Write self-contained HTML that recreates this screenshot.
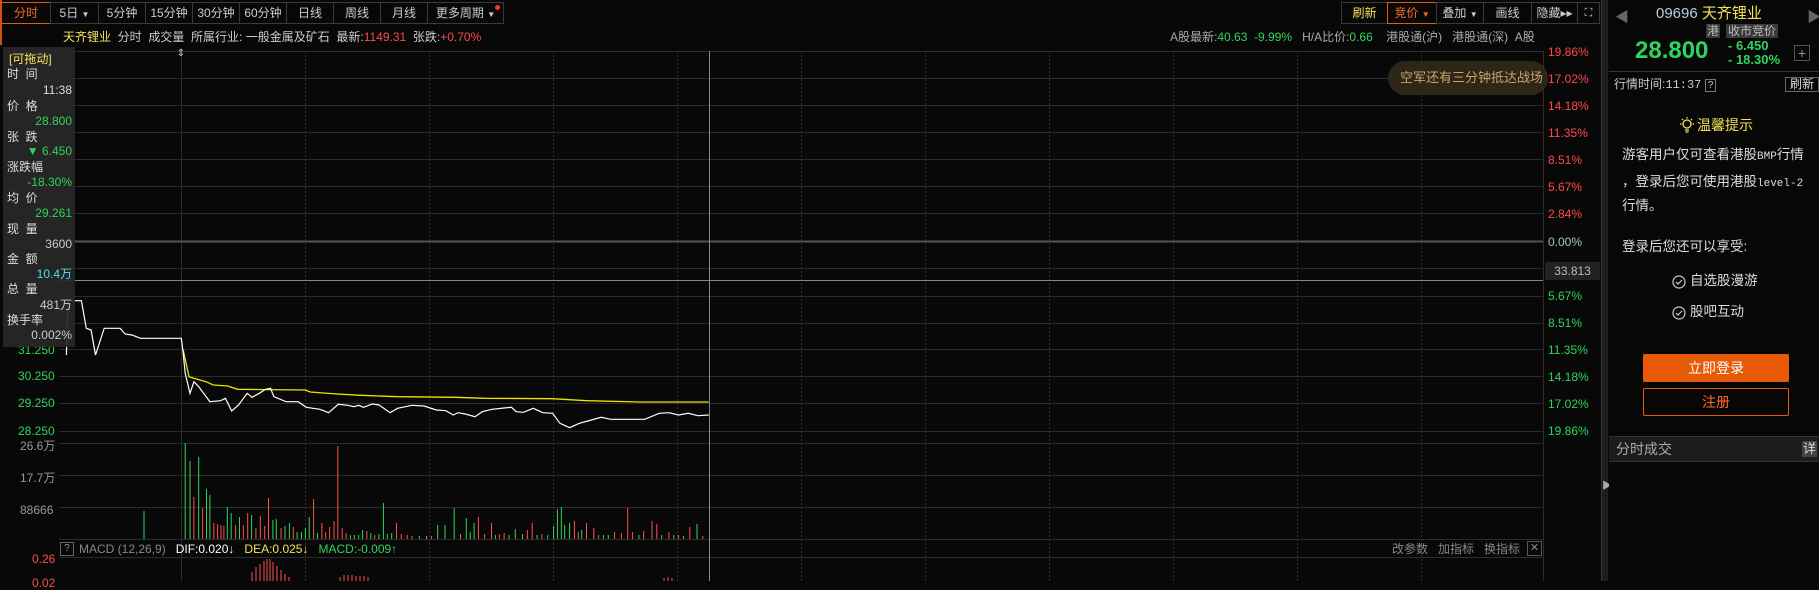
<!DOCTYPE html>
<html><head><meta charset="utf-8"><style>
*{margin:0;padding:0;box-sizing:border-box}
body{width:1819px;height:581px;background:#080808;overflow:hidden;position:relative;font-family:"Liberation Sans","Noto Sans CJK SC",sans-serif;font-size:12px;color:#bbb}
.a{position:absolute;white-space:nowrap;line-height:1}
.tab{position:absolute;top:2px;height:22px;border:1px solid #3a3a3a;color:#ccc;font-size:12px;line-height:20px;text-align:center}
.g{color:#2fd55a}.r{color:#ff4a4a}.y{color:#f2e25a}
.m{font-family:"Liberation Mono",monospace;font-size:12px}
</style></head><body>

<div class="tab" style="left:1px;width:50px;border-color:#e05a10;color:#ff6a20">分时</div>
<div class="tab" style="left:50px;width:49px">5日 <span style="font-size:8px">▼</span></div>
<div class="tab" style="left:98px;width:48px">5分钟</div>
<div class="tab" style="left:145px;width:48px">15分钟</div>
<div class="tab" style="left:192px;width:48px">30分钟</div>
<div class="tab" style="left:239px;width:48px">60分钟</div>
<div class="tab" style="left:286px;width:48px">日线</div>
<div class="tab" style="left:333px;width:48px">周线</div>
<div class="tab" style="left:380px;width:48px">月线</div>
<div class="tab" style="left:427px;width:77px">更多周期 <span style="font-size:8px">▼</span><span style="position:absolute;right:3px;top:2px;width:5px;height:5px;border-radius:50%;background:#f33"></span></div>
<div class="a" style="left:0;top:0;width:2px;height:45px;background:#d05010"></div>

<div class="tab" style="left:1341px;width:47px;color:#f2e25a">刷新</div>
<div class="tab" style="left:1387px;width:50px;border-color:#e05a10;color:#ff6a20">竞价 <span style="font-size:8px">▼</span></div>
<div class="tab" style="left:1436px;width:48px">叠加 <span style="font-size:8px">▼</span></div>
<div class="tab" style="left:1483px;width:49px">画线</div>
<div class="tab" style="left:1531px;width:47px">隐藏▸▸</div>
<div class="tab" style="left:1577px;width:23px;font-size:11px">⛶</div>

<div class="a" style="left:63px;top:31px;color:#ccc"><span class="y">天齐锂业</span>&nbsp; 分时 &nbsp;成交量 &nbsp;所属行业: 一般金属及矿石 &nbsp;最新:<span class="r">1149.31</span> &nbsp;张跌:<span class="r">+0.70%</span></div>
<div class="a" style="left:1170px;top:31px;color:#aaa">A股最新:<span class="g">40.63 &nbsp;-9.99%</span> &nbsp;&nbsp;H/A比价:<span class="g">0.66</span> &nbsp;&nbsp; 港股通(沪) &nbsp; 港股通(深) &nbsp;A股</div>

<svg class="a" style="left:0;top:0" width="1609" height="581">
<g stroke="#2c2c2c" stroke-width="1">
<line x1="59" y1="51.5" x2="1543" y2="51.5"/><line x1="59" y1="78.5" x2="1543" y2="78.5"/><line x1="59" y1="105.5" x2="1543" y2="105.5"/><line x1="59" y1="132.5" x2="1543" y2="132.5"/><line x1="59" y1="159.5" x2="1543" y2="159.5"/><line x1="59" y1="186.5" x2="1543" y2="186.5"/><line x1="59" y1="213.5" x2="1543" y2="213.5"/><line x1="59" y1="268.5" x2="1543" y2="268.5"/><line x1="59" y1="296.5" x2="1543" y2="296.5"/><line x1="59" y1="323.5" x2="1543" y2="323.5"/><line x1="59" y1="349.5" x2="1543" y2="349.5"/><line x1="59" y1="376.5" x2="1543" y2="376.5"/><line x1="59" y1="403.5" x2="1543" y2="403.5"/><line x1="59" y1="431.5" x2="1543" y2="431.5"/>
<line x1="59" y1="443.5" x2="1543" y2="443.5"/><line x1="59" y1="475.5" x2="1543" y2="475.5"/><line x1="59" y1="507.5" x2="1543" y2="507.5"/><line x1="59" y1="539.5" x2="1543" y2="539.5"/><line x1="59" y1="557.5" x2="1543" y2="557.5"/>
<line x1="1543.5" y1="51" x2="1543.5" y2="581"/><line x1="181.5" y1="51" x2="181.5" y2="581"/>
</g>
<line x1="59" y1="241.5" x2="1543" y2="241.5" stroke="#555" stroke-width="2"/>
<g stroke="#333" stroke-dasharray="2,2">
<line x1="305.5" y1="51" x2="305.5" y2="581"/><line x1="429.5" y1="51" x2="429.5" y2="581"/><line x1="553.5" y1="51" x2="553.5" y2="581"/><line x1="677.5" y1="51" x2="677.5" y2="581"/><line x1="801.5" y1="51" x2="801.5" y2="581"/><line x1="925.5" y1="51" x2="925.5" y2="581"/><line x1="1049.5" y1="51" x2="1049.5" y2="581"/><line x1="1173.5" y1="51" x2="1173.5" y2="581"/><line x1="1297.5" y1="51" x2="1297.5" y2="581"/><line x1="1421.5" y1="51" x2="1421.5" y2="581"/>
</g>
<line x1="59" y1="280.5" x2="1543" y2="280.5" stroke="#888"/>
<line x1="709.5" y1="51" x2="709.5" y2="581" stroke="#888"/>
<text x="181" y="56" fill="#ccc" font-size="10" text-anchor="middle">⇕</text>
<polyline fill="none" stroke="#e8e800" stroke-width="1.3" points="183.2,350 189,376.7 193.9,378.3 206,381.7 213.3,385 227.8,386 237.5,389.3 305.4,390 310.2,392 336.9,394 361.1,395.3 397.5,396.7 455.6,397.3 484.7,398.3 552.6,398.7 586.5,400.7 639.9,402 708.7,402"/>
<polyline fill="none" stroke="#fff" stroke-width="1.2" points="66.4,355 67.9,300.7 81.4,300.7 86.3,328.3 91.1,330 95.5,355 104.2,328.3 120.2,328.3 125.1,334 131.8,335 140.6,338.3 181.3,338.3 183.2,353.3 185.2,373.3 190,393.3 193.9,381.7 198.7,386.7 209.9,401.7 220.6,400.7 225.4,398.3 231.7,411 238.5,405 247.2,393.3 252.1,397.3 259.3,393.3 265.6,389.3 270.5,388.3 273.9,396.7 286,401.7 298.1,401.7 306.3,407.3 319.9,409.3 328.6,412.7 338.3,404.3 348,405.3 353.9,406.7 358.7,405.3 363.5,407.3 372.3,404 379,405 390.2,412.7 397.5,408.3 412,405.3 424.1,406 436.3,410 445.9,410.7 453.2,415 458.1,412.7 465.3,414 475,416.7 482.3,411.7 492,409.3 504.1,408 511.4,407.3 516.2,411.7 523.5,412.3 533.2,408.3 542.9,412.7 552.6,413.3 559.9,423.3 569.6,427.7 579.3,423.3 591.4,420 601.1,417.3 610.8,419.3 644.7,419.3 659.2,413.3 668.9,412.7 678.6,415 688.3,413.3 698,415.7 708.7,415"/>
<g stroke="#2fd55a">
<line x1="144" y1="511" x2="144" y2="539"/><line x1="185.2" y1="443" x2="185.2" y2="539"/><line x1="190" y1="461" x2="190" y2="539"/><line x1="198.7" y1="457" x2="198.7" y2="539"/><line x1="206.5" y1="489" x2="206.5" y2="539"/><line x1="209.9" y1="495" x2="209.9" y2="539"/><line x1="227.3" y1="507" x2="227.3" y2="539"/><line x1="231.2" y1="513" x2="231.2" y2="539"/><line x1="239.5" y1="517" x2="239.5" y2="539"/><line x1="251.6" y1="515" x2="251.6" y2="539"/><line x1="272.9" y1="520" x2="272.9" y2="539"/><line x1="276.3" y1="519" x2="276.3" y2="539"/><line x1="285" y1="526" x2="285" y2="539"/><line x1="289.4" y1="523" x2="289.4" y2="539"/><line x1="297.1" y1="532" x2="297.1" y2="539"/><line x1="301.5" y1="532" x2="301.5" y2="539"/><line x1="305.4" y1="528" x2="305.4" y2="539"/><line x1="309.2" y1="517" x2="309.2" y2="539"/><line x1="317.5" y1="533" x2="317.5" y2="539"/><line x1="350.4" y1="535" x2="350.4" y2="539"/><line x1="354.3" y1="535" x2="354.3" y2="539"/><line x1="358.7" y1="535" x2="358.7" y2="539"/><line x1="362.6" y1="530" x2="362.6" y2="539"/><line x1="370.8" y1="533" x2="370.8" y2="539"/><line x1="379" y1="534" x2="379" y2="539"/><line x1="383.4" y1="503" x2="383.4" y2="539"/><line x1="387.3" y1="534" x2="387.3" y2="539"/><line x1="391.7" y1="533" x2="391.7" y2="539"/><line x1="419.3" y1="536" x2="419.3" y2="539"/><line x1="426.5" y1="536" x2="426.5" y2="539"/><line x1="437.7" y1="525" x2="437.7" y2="539"/><line x1="445" y1="525" x2="445" y2="539"/><line x1="454.2" y1="508" x2="454.2" y2="539"/><line x1="466.3" y1="518" x2="466.3" y2="539"/><line x1="470.2" y1="532" x2="470.2" y2="539"/><line x1="474.1" y1="523" x2="474.1" y2="539"/><line x1="495.4" y1="535" x2="495.4" y2="539"/><line x1="509" y1="535" x2="509" y2="539"/><line x1="515.3" y1="529" x2="515.3" y2="539"/><line x1="522.5" y1="534" x2="522.5" y2="539"/><line x1="537.1" y1="535" x2="537.1" y2="539"/><line x1="547.7" y1="535" x2="547.7" y2="539"/><line x1="553.6" y1="526" x2="553.6" y2="539"/><line x1="557.4" y1="509" x2="557.4" y2="539"/><line x1="561.3" y1="507" x2="561.3" y2="539"/><line x1="564.7" y1="525" x2="564.7" y2="539"/><line x1="569.6" y1="523" x2="569.6" y2="539"/><line x1="581.7" y1="530" x2="581.7" y2="539"/><line x1="603.5" y1="535" x2="603.5" y2="539"/><line x1="608.3" y1="535" x2="608.3" y2="539"/><line x1="638.9" y1="535" x2="638.9" y2="539"/><line x1="661.7" y1="535" x2="661.7" y2="539"/><line x1="673.8" y1="535" x2="673.8" y2="539"/><line x1="683.5" y1="536" x2="683.5" y2="539"/><line x1="697" y1="524" x2="697" y2="539"/>
</g>
<g stroke="#ff5050">
<line x1="193.9" y1="497" x2="193.9" y2="539"/><line x1="202.6" y1="508" x2="202.6" y2="539"/><line x1="213.8" y1="523" x2="213.8" y2="539"/><line x1="217.6" y1="524" x2="217.6" y2="539"/><line x1="221" y1="525" x2="221" y2="539"/><line x1="223.9" y1="526" x2="223.9" y2="539"/><line x1="235.6" y1="525" x2="235.6" y2="539"/><line x1="243.3" y1="525" x2="243.3" y2="539"/><line x1="247.7" y1="513" x2="247.7" y2="539"/><line x1="255.9" y1="528" x2="255.9" y2="539"/><line x1="260.3" y1="516" x2="260.3" y2="539"/><line x1="264.7" y1="526" x2="264.7" y2="539"/><line x1="268.5" y1="498" x2="268.5" y2="539"/><line x1="281.1" y1="528" x2="281.1" y2="539"/><line x1="293.3" y1="527" x2="293.3" y2="539"/><line x1="313.6" y1="499" x2="313.6" y2="539"/><line x1="321.9" y1="523" x2="321.9" y2="539"/><line x1="325.7" y1="532" x2="325.7" y2="539"/><line x1="329.6" y1="527" x2="329.6" y2="539"/><line x1="334" y1="521" x2="334" y2="539"/><line x1="337.8" y1="446" x2="337.8" y2="539"/><line x1="342.2" y1="528" x2="342.2" y2="539"/><line x1="346.1" y1="533" x2="346.1" y2="539"/><line x1="366.9" y1="531" x2="366.9" y2="539"/><line x1="374.7" y1="535" x2="374.7" y2="539"/><line x1="396.5" y1="523" x2="396.5" y2="539"/><line x1="401.3" y1="534" x2="401.3" y2="539"/><line x1="407.2" y1="535" x2="407.2" y2="539"/><line x1="412" y1="536" x2="412" y2="539"/><line x1="431.4" y1="536" x2="431.4" y2="539"/><line x1="460.5" y1="534" x2="460.5" y2="539"/><line x1="478.4" y1="517" x2="478.4" y2="539"/><line x1="484.7" y1="534" x2="484.7" y2="539"/><line x1="491.5" y1="523" x2="491.5" y2="539"/><line x1="499.3" y1="534" x2="499.3" y2="539"/><line x1="504.1" y1="533" x2="504.1" y2="539"/><line x1="527.4" y1="530" x2="527.4" y2="539"/><line x1="532.2" y1="523" x2="532.2" y2="539"/><line x1="541.9" y1="534" x2="541.9" y2="539"/><line x1="574.4" y1="521" x2="574.4" y2="539"/><line x1="578.3" y1="532" x2="578.3" y2="539"/><line x1="586.5" y1="523" x2="586.5" y2="539"/><line x1="593.8" y1="528" x2="593.8" y2="539"/><line x1="598.6" y1="535" x2="598.6" y2="539"/><line x1="614.6" y1="532" x2="614.6" y2="539"/><line x1="621.4" y1="533" x2="621.4" y2="539"/><line x1="627.7" y1="508" x2="627.7" y2="539"/><line x1="632.6" y1="532" x2="632.6" y2="539"/><line x1="643.7" y1="531" x2="643.7" y2="539"/><line x1="652" y1="521" x2="652" y2="539"/><line x1="656.8" y1="524" x2="656.8" y2="539"/><line x1="668.9" y1="532" x2="668.9" y2="539"/><line x1="678.6" y1="535" x2="678.6" y2="539"/><line x1="689.8" y1="527" x2="689.8" y2="539"/><line x1="702.8" y1="536" x2="702.8" y2="539"/>
</g>
<g stroke="#ff5050">
<line x1="252" y1="572" x2="252" y2="581"/><line x1="256" y1="567" x2="256" y2="581"/><line x1="260" y1="564" x2="260" y2="581"/><line x1="264" y1="561" x2="264" y2="581"/><line x1="267" y1="559" x2="267" y2="581"/><line x1="270" y1="559" x2="270" y2="581"/><line x1="273" y1="562" x2="273" y2="581"/><line x1="277" y1="566" x2="277" y2="581"/><line x1="281" y1="570" x2="281" y2="581"/><line x1="285" y1="574" x2="285" y2="581"/><line x1="289" y1="577" x2="289" y2="581"/>
<line x1="340" y1="577" x2="340" y2="581"/><line x1="344" y1="575" x2="344" y2="581"/><line x1="348" y1="575" x2="348" y2="581"/><line x1="352" y1="575" x2="352" y2="581"/><line x1="356" y1="576" x2="356" y2="581"/><line x1="360" y1="576" x2="360" y2="581"/><line x1="364" y1="576" x2="364" y2="581"/><line x1="368" y1="577" x2="368" y2="581"/><line x1="664" y1="578" x2="664" y2="581"/><line x1="668" y1="577" x2="668" y2="581"/><line x1="672" y1="578" x2="672" y2="581"/>
</g>
</svg>

<div class="a r" style="left:1548px;top:46px">19.86%</div>
<div class="a r" style="left:1548px;top:73px">17.02%</div>
<div class="a r" style="left:1548px;top:100px">14.18%</div>
<div class="a r" style="left:1548px;top:127px">11.35%</div>
<div class="a r" style="left:1548px;top:154px">8.51%</div>
<div class="a r" style="left:1548px;top:181px">5.67%</div>
<div class="a r" style="left:1548px;top:208px">2.84%</div>
<div class="a" style="left:1548px;top:236px;color:#9cc">0.00%</div>
<div class="a" style="left:1545px;top:262px;width:55px;height:18px;background:#222;color:#bbb;text-align:center;line-height:18px">33.813</div>
<div class="a g" style="left:1548px;top:290px">5.67%</div>
<div class="a g" style="left:1548px;top:317px">8.51%</div>
<div class="a g" style="left:1548px;top:344px">11.35%</div>
<div class="a g" style="left:1548px;top:371px">14.18%</div>
<div class="a g" style="left:1548px;top:398px">17.02%</div>
<div class="a g" style="left:1548px;top:425px">19.86%</div>

<div class="a g" style="left:18px;top:344px">31.250</div>
<div class="a g" style="left:18px;top:370px">30.250</div>
<div class="a g" style="left:18px;top:397px">29.250</div>
<div class="a g" style="left:18px;top:425px">28.250</div>
<div class="a" style="left:20px;top:440px;color:#999">26.6万</div>
<div class="a" style="left:20px;top:472px;color:#999">17.7万</div>
<div class="a" style="left:20px;top:504px;color:#999">88666</div>
<div class="a r" style="left:32px;top:553px">0.26</div>
<div class="a r" style="left:32px;top:577px">0.02</div>

<div class="a" style="left:60px;top:542px;width:14px;height:14px;border:1px solid #666;color:#999;font-size:10px;text-align:center;line-height:12px">?</div>
<div class="a" style="left:79px;top:543px;color:#888">MACD (12,26,9) &nbsp; <span style="color:#fff">DIF:0.020↓</span> &nbsp; <span class="y">DEA:0.025↓</span> &nbsp; <span class="g">MACD:-0.009↑</span></div>
<div class="a" style="left:1392px;top:543px;color:#888">改参数 &nbsp;&nbsp;加指标 &nbsp;&nbsp;换指标</div>
<div class="a" style="left:1527px;top:541px;width:15px;height:15px;border:1px solid #555;color:#888;text-align:center;line-height:13px;font-size:11px">✕</div>

<div class="a" style="left:1388px;top:61px;width:160px;height:34px;border-radius:17px;background:#2e2718;color:#c9a46a;font-size:13px;line-height:34px;padding-left:12px">空军还有三分钟抵达战场</div>

<div class="a" style="left:3px;top:47px;width:72px;height:300px;background:rgba(40,40,40,0.93);font-size:12px;color:#ddd">
<div class="a y" style="left:6px;top:6px">[可拖动]</div>
<div class="a" style="left:4px;top:21px">时 &nbsp;间</div>
<div class="a" style="right:3px;top:37px">11:38</div>
<div class="a" style="left:4px;top:53px">价 &nbsp;格</div>
<div class="a g" style="right:3px;top:68px">28.800</div>
<div class="a" style="left:4px;top:84px">张 &nbsp;跌</div>
<div class="a g" style="right:3px;top:98px">▼ 6.450</div>
<div class="a" style="left:4px;top:114px">涨跌幅</div>
<div class="a g" style="right:3px;top:129px">-18.30%</div>
<div class="a" style="left:4px;top:145px">均 &nbsp;价</div>
<div class="a g" style="right:3px;top:160px">29.261</div>
<div class="a" style="left:4px;top:176px">现 &nbsp;量</div>
<div class="a" style="right:3px;top:191px;color:#ccc">3600</div>
<div class="a" style="left:4px;top:206px">金 &nbsp;额</div>
<div class="a" style="right:3px;top:221px;color:#4de0f0">10.4万</div>
<div class="a" style="left:4px;top:236px">总 &nbsp;量</div>
<div class="a" style="right:3px;top:252px;color:#ccc">481万</div>
<div class="a" style="left:4px;top:267px">换手率</div>
<div class="a" style="right:3px;top:282px;color:#ccc">0.002%</div>
</div>

<div class="a" style="left:1601px;top:0;width:7px;height:581px;background:#1e1e1e;border-left:1px solid #333"></div>
<div class="a" style="left:1602px;top:482px;color:#aaa;font-size:10px">▶</div>

<div class="a" style="left:1609px;top:0;width:210px;height:581px;background:#070707"></div>
<div class="a" style="left:1615px;top:10px;color:#666;font-size:14px">◀</div>
<div class="a" style="left:1807px;top:10px;color:#666;font-size:14px">▶</div>
<div class="a" style="left:1656px;top:6px;font-size:15px;color:#bcd">09696 <span class="y">天齐锂业</span></div>
<div class="a" style="left:1706px;top:24px;background:#3a3a3a;color:#bbb;font-size:12px;padding:1px 1px">港</div>
<div class="a" style="left:1726px;top:24px;background:#3a3a3a;color:#bbb;font-size:12px;padding:1px 2px">收市竞价</div>
<div class="a g" style="left:1635px;top:39px;font-size:24px;font-weight:bold">28.800</div>
<div class="a g" style="left:1728px;top:39px;font-size:13px;font-weight:bold;line-height:14px">- 6.450<br>- 18.30%</div>
<div class="a" style="left:1794px;top:45px;width:16px;height:16px;border:1px solid #555;color:#999;text-align:center;line-height:14px;font-size:14px">+</div>
<div class="a" style="left:1609px;top:71px;width:210px;height:1px;background:#333"></div>
<div class="a" style="left:1614px;top:78px;color:#ccc;font-size:12px">行情时间:<span class="m">11:37</span> <span style="border:1px solid #777;padding:0 2px;font-size:10px">?</span></div>
<div class="a" style="left:1785px;top:77px;width:34px;height:15px;border:1px solid #666;color:#ddd;text-align:center;line-height:13px">刷新</div>
<svg class="a" style="left:1680px;top:117px" width="14" height="16"><g fill="none" stroke="#f2e25a" stroke-width="1.3"><circle cx="7" cy="7" r="4"/><line x1="5" y1="13" x2="9" y2="13"/><line x1="5.5" y1="15" x2="8.5" y2="15"/><line x1="7" y1="0" x2="7" y2="1.5"/><line x1="0" y1="7" x2="1.5" y2="7"/><line x1="12.5" y1="7" x2="14" y2="7"/><line x1="2" y1="2" x2="3" y2="3"/><line x1="12" y1="2" x2="11" y2="3"/></g></svg>
<div class="a y" style="left:1697px;top:118px;font-size:14px">温馨提示</div>
<div class="a" style="left:1622px;top:148px;font-size:13.5px;color:#ddd">游客用户仅可查看港股<span class="m" style="font-size:11px">BMP</span>行情</div>
<div class="a" style="left:1622px;top:175px;font-size:13.5px;color:#ddd">，登录后您可使用港股<span class="m" style="font-size:11px">level-2</span></div>
<div class="a" style="left:1622px;top:199px;font-size:13.5px;color:#ddd">行情。</div>
<div class="a" style="left:1622px;top:240px;font-size:13.5px;color:#ddd">登录后您还可以享受:</div>
<svg class="a" style="left:1672px;top:275px" width="14" height="46"><g fill="none" stroke="#ccc" stroke-width="1.2"><circle cx="7" cy="7" r="6"/><path d="M4 7l2 2 4-4"/><circle cx="7" cy="38" r="6"/><path d="M4 38l2 2 4-4"/></g></svg>
<div class="a" style="left:1690px;top:274px;font-size:13.5px;color:#ddd">自选股漫游</div>
<div class="a" style="left:1690px;top:305px;font-size:13.5px;color:#ddd">股吧互动</div>
<div class="a" style="left:1643px;top:354px;width:146px;height:28px;background:#e65a06;border-radius:2px;color:#fff;text-align:center;line-height:28px;font-size:14px">立即登录</div>
<div class="a" style="left:1643px;top:388px;width:146px;height:28px;border:1px solid #e65a06;border-radius:2px;color:#ff6a20;text-align:center;line-height:26px;font-size:14px">注册</div>
<div class="a" style="left:1609px;top:436px;width:210px;height:26px;background:#1c1c1c;border-top:1px solid #333;border-bottom:1px solid #333"></div>
<div class="a" style="left:1616px;top:442px;font-size:14px;color:#aaa">分时成交</div>
<div class="a" style="left:1802px;top:441px;width:15px;height:16px;background:#444;color:#ddd;font-size:13px;text-align:center;line-height:16px">详</div>
</body></html>
